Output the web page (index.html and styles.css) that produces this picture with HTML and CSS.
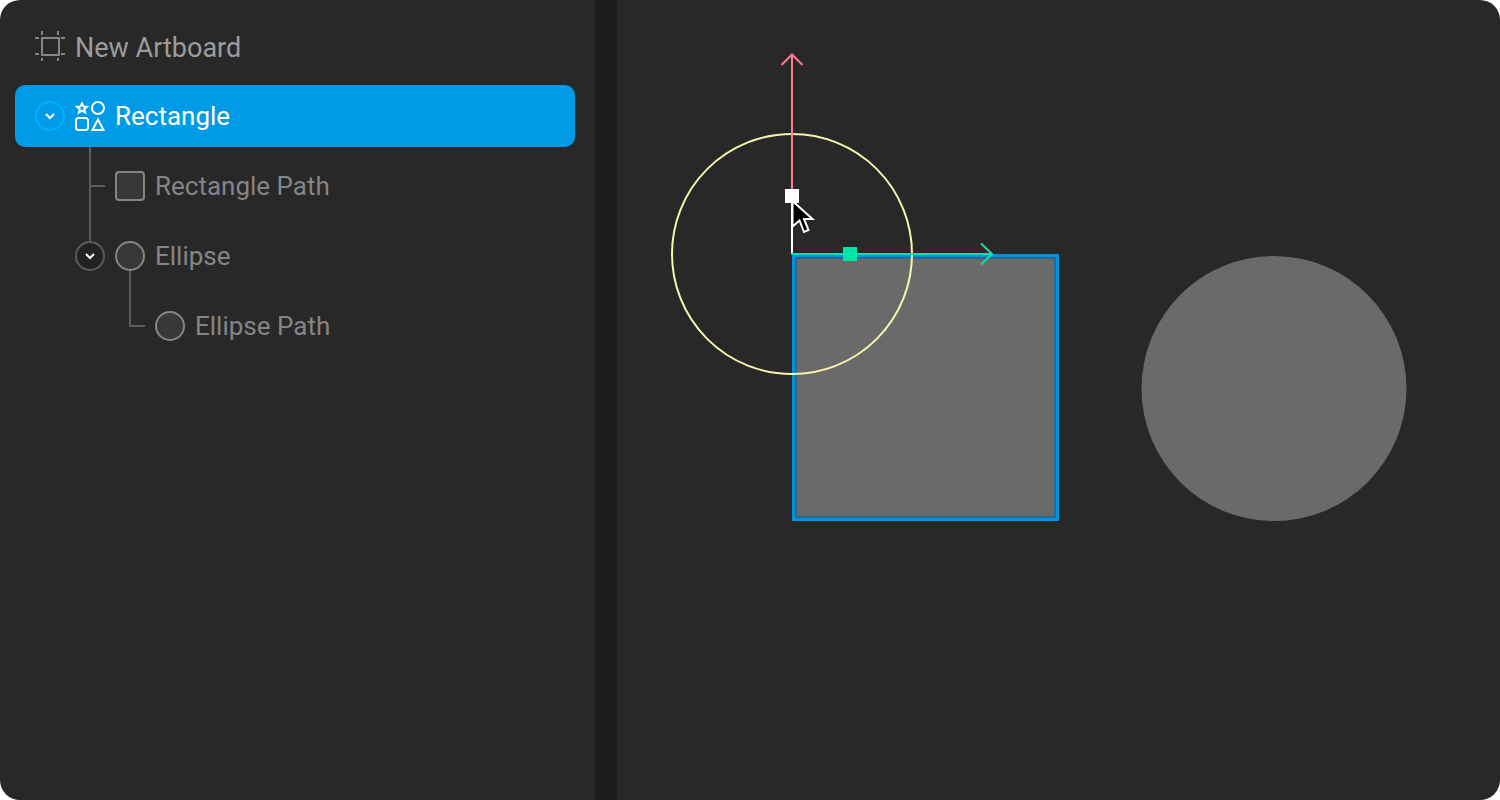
FILE: index.html
```html
<!DOCTYPE html>
<html lang="en">
<head>
<meta charset="utf-8">
<title>New Artboard</title>
<link rel="stylesheet" href="styles.css">
</head>
<body>
<div class="editor">
  <nav class="hierarchy" aria-label="Hierarchy">
    <ul class="tree">
      <li class="row row-artboard">
        <svg class="icon" width="30" height="30" viewBox="0 0 30 30" fill="none" stroke="#858585" stroke-width="2"><path d="M7 7H24V24H7ZM7 0V4M23 0V4M7 27V30M23 27V30M0 7H4M26 7H30M0 23H4M26 23H30"/></svg>
        <span class="label">New Artboard</span>
      </li>
      <li class="row row-selected">
        <button class="toggle" type="button" aria-label="Collapse Rectangle" aria-expanded="true">
          <svg class="icon" width="30" height="30" viewBox="0 0 30 30" fill="none" stroke-width="2"><circle cx="15" cy="15" r="14" stroke="#00b0fb"/><path d="M11 13L15 17L19 13" stroke="#fff"/></svg>
        </button>
        <svg class="icon" width="30" height="30" viewBox="0 0 30 30" fill="none" stroke="#fff" stroke-width="2"><path d="M7 2.500L8.400 5.400L12 5.800L9.300 8.100L10.100 11.500L7 9.700L3.900 11.500L4.700 8.100L2 5.800L5.600 5.400Z"/><circle cx="23" cy="7" r="6"/><rect x="1" y="17" width="12" height="12" rx="2.500"/><path d="M23 18.500L28.500 29H17.500Z"/></svg>
        <span class="label">Rectangle</span>
      </li>
      <li class="row row-child">
        <svg class="guide" width="30" height="70" viewBox="0 0 30 70" fill="none" stroke="#5c5c5c" stroke-width="2"><path d="M15 -4V70M15 35H30"/></svg>
        <svg class="icon" width="30" height="30" viewBox="0 0 30 30" fill="#383838" stroke="#858585" stroke-width="2"><rect x="1" y="1" width="28" height="28" rx="3"/></svg>
        <span class="label">Rectangle Path</span>
      </li>
      <li class="row row-child">
        <button class="toggle" type="button" aria-label="Collapse Ellipse" aria-expanded="true">
          <svg class="guide" width="30" height="70" viewBox="0 0 30 70" fill="none" stroke="#5c5c5c" stroke-width="2"><path d="M15 0V21"/><circle cx="15" cy="35" r="14" fill="#222"/><path d="M11 33L15 37L19 33" stroke="#fff"/></svg>
        </button>
        <svg class="icon" width="30" height="30" viewBox="0 0 30 30" fill="#383838" stroke="#858585" stroke-width="2"><circle cx="15" cy="15" r="14"/></svg>
        <span class="label">Ellipse</span>
      </li>
      <li class="row row-grandchild">
        <svg class="guide" width="30" height="70" viewBox="0 0 30 70" fill="none" stroke="#5c5c5c" stroke-width="2"><path d="M15 -20V35H30"/></svg>
        <svg class="icon" width="30" height="30" viewBox="0 0 30 30" fill="#383838" stroke="#858585" stroke-width="2"><circle cx="15" cy="15" r="14"/></svg>
        <span class="label">Ellipse Path</span>
      </li>
    </ul>
  </nav>
  <main class="stage">
    <svg class="drawing" role="img" aria-label="Stage with a selected rectangle and an ellipse" fill="none" stroke-width="2">
      <circle cx="657" cy="388.500" r="132.500" fill="#6a6a6a"/>
      <rect x="175" y="254" width="267" height="267" fill="#6a6a6a"/>
      <rect x="178" y="257" width="261" height="261" stroke="#2b6790" stroke-width="4"/>
      <rect x="176.500" y="255.500" width="264" height="264" stroke="#0093dd" stroke-width="3"/>
      <circle cx="175" cy="254" r="120" stroke="#f8f4b0"/>
      <path d="M175 196V55M164.500 65L175 54.500L185.500 65" stroke="#ff7b90"/>
      <path d="M175 196V254" stroke="#fff"/>
      <path d="M174 254H375M364 243.500L375 254L364 264.500" stroke="#00e5a8"/>
      <rect x="226" y="247" width="14" height="14" fill="#00e5a8"/>
      <rect x="168" y="189" width="14" height="14" fill="#fff"/>
      <path d="M175.500 201V226.500L182.500 220.500L187 232L191.500 230L187 219H195.500Z" fill="#000" stroke="#fff"/>
    </svg>
  </main>
</div>
</body>
</html>
```
FILE: styles.css
```css
* {
  box-sizing: border-box;
}

body {
  margin: 0;
  background: #fff;
  font-family: Roboto, "Liberation Sans", sans-serif;
}

.editor {
  display: flex;
  min-height: 100vh;
  overflow: hidden;
  border-radius: 20px;
  background: #282828;
}

.hierarchy {
  flex: 0 1 617px;
  border-right: 22px solid #1c1c1c;
}

.tree {
  margin: 0;
  padding: 11px 20px 0 15px;
  list-style: none;
}

.row {
  display: flex;
  align-items: center;
  gap: 10px;
  height: 70px;
  padding-left: 20px;
  color: #858585;
  font-size: 26px;
  line-height: 32px;
}

.row-artboard {
  color: #9c9c9c;
  font-size: 27px;
}

.row-artboard .label {
  padding-top: 4px;
}

.row-selected {
  height: 62px;
  margin: 4px 0;
  border-radius: 10px;
  background: #009be6;
  color: #fff;
}

.row-child {
  padding-left: 60px;
}

.row-grandchild {
  padding-left: 100px;
}

.icon,
.guide {
  display: block;
  flex: none;
}

.guide {
  overflow: visible;
}

.toggle {
  flex: none;
  padding: 0;
  border: 0;
  background: none;
  cursor: pointer;
}

.label {
  white-space: nowrap;
}

.stage {
  display: flex;
  flex: 1;
}

.drawing {
  flex: 1;
  width: 100%;
}
```
